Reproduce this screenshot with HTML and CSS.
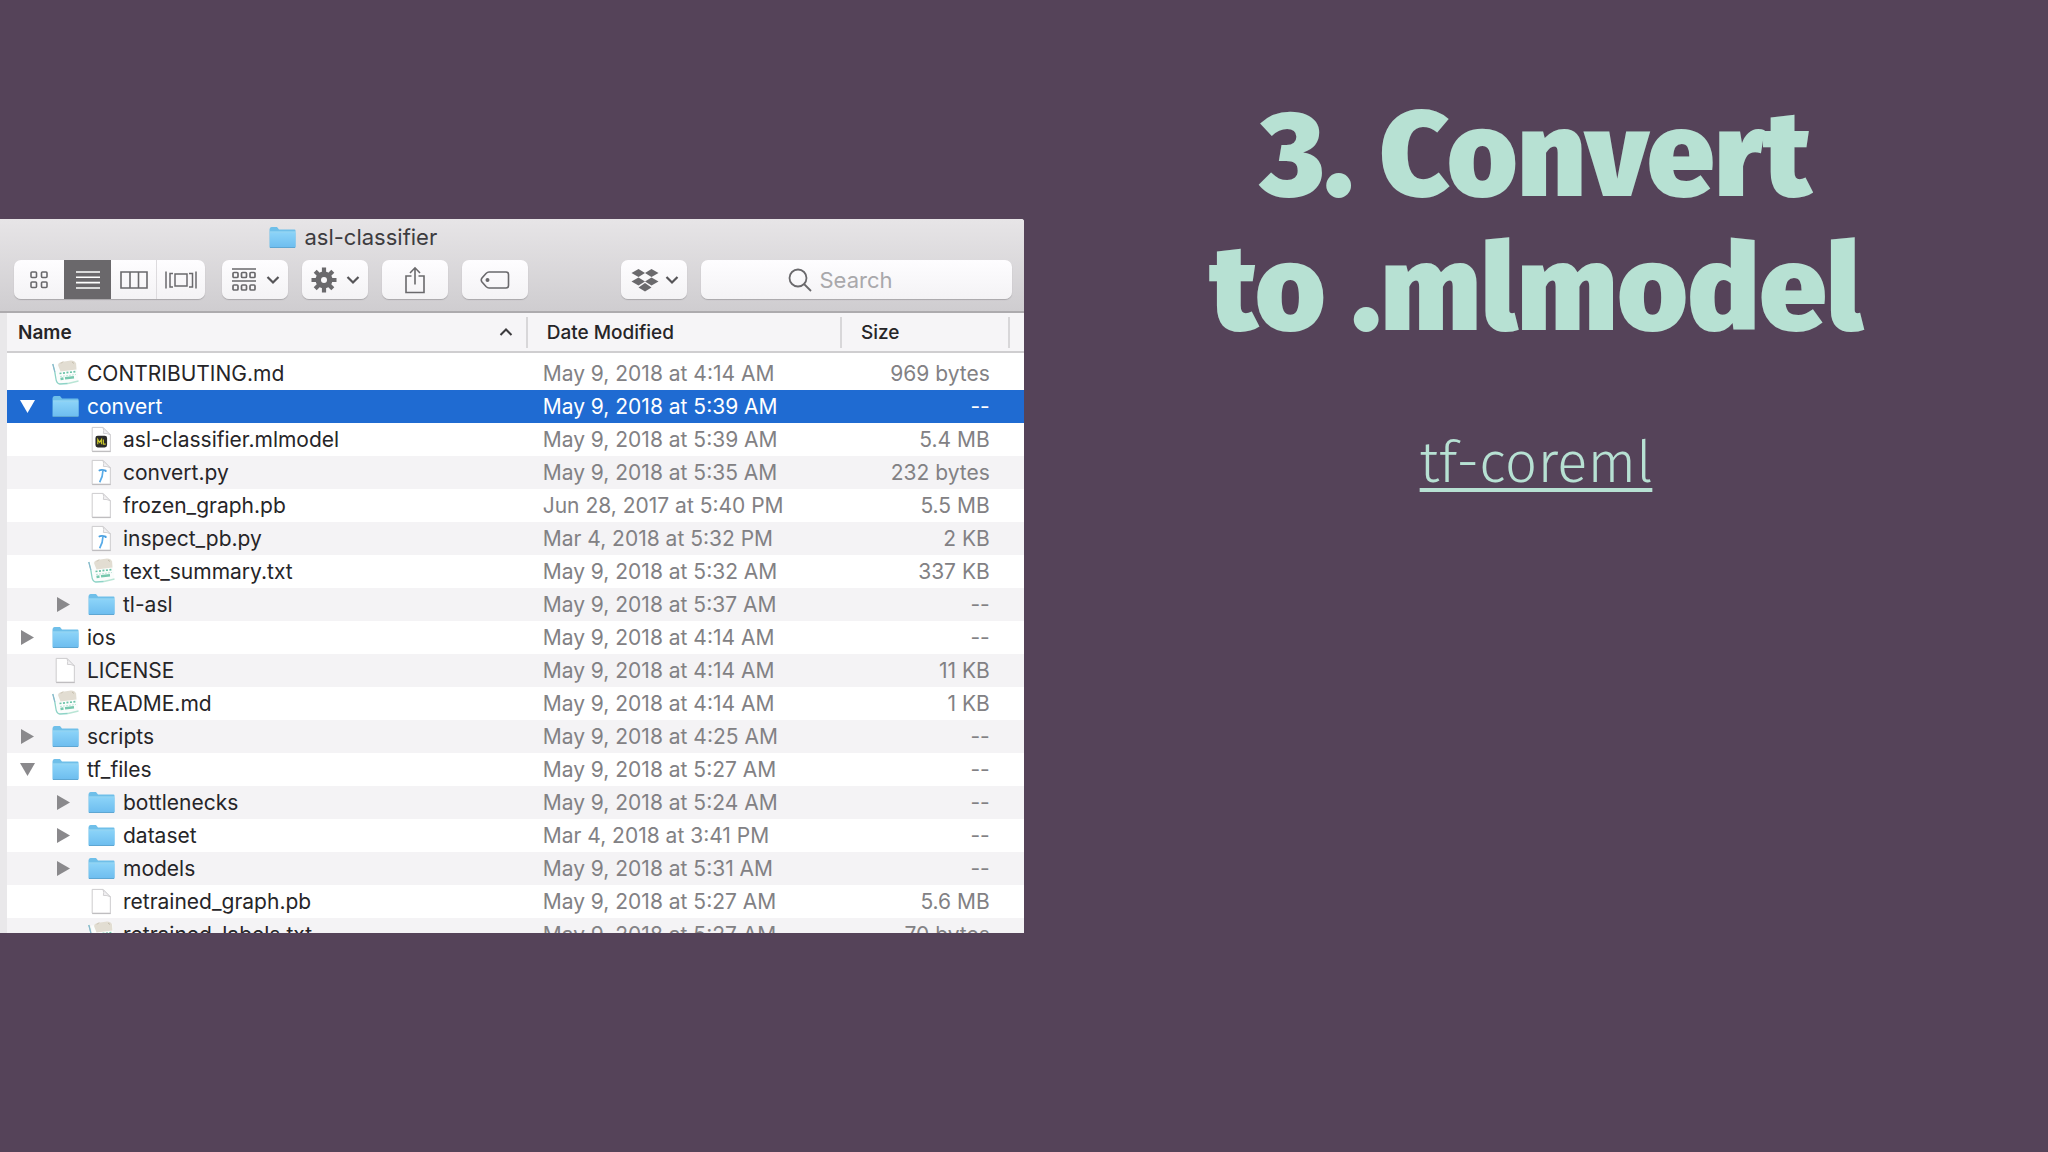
FILE: index.html
```html
<!DOCTYPE html>
<html lang="en">
<head>
<meta charset="utf-8">
<meta name="viewport" content="width=device-width, initial-scale=1">
<title>3. Convert to .mlmodel</title>
<link rel="stylesheet" href="styles.css">
</head>
<body>
<svg class="defs" aria-hidden="true">
  <defs>
    <linearGradient id="folder-fill" x1="0" y1="0" x2="0" y2="1">
      <stop offset="0" stop-color="#8bd3f8"/><stop offset="1" stop-color="#6dbdef"/>
    </linearGradient>
    <symbol id="folder" viewBox="0 0 27 23">
      <path d="M0.5 21V3.5Q0.5 1 2.5 1H8l2 2.5h15.5q1 0 1 1V21q0 1-1 1h-24q-1 0-1-1z" fill="#6fbfe9"/>
      <path d="M1 6.5h25.5V20.5q0 1-1 1h-23.500q-1 0-1-1z" fill="url(#folder-fill)"/>
      <path d="M1 6h25.500" stroke="#a3def8"/>
      <path d="M1 21.500h25" stroke="#5ea6d2"/>
    </symbol>
    <symbol id="page" viewBox="0 0 27 29">
      <path d="M3.500 1.500h11.500l8 8v17.500h-19.500z" fill="#fff" stroke="#c9c8ca"/>
      <path d="M15 1.500q1.500 3 0.500 6.500q4-.5 7.500 1.500z" fill="#f1f0f2" stroke="#cfced0"/>
      <path d="M3.500 27.500h20" stroke="#b9b8ba"/>
    </symbol>
    <symbol id="script" viewBox="0 0 27 29">
      <use href="#page" width="27" height="29"/>
      <path d="M10.500 12.500q3-1.500 7.500 0v1.500" fill="none" stroke="#4aa0e0" stroke-width="1.800"/>
      <path d="M15 13q0 6-3.500 12" fill="none" stroke="#58abe8" stroke-width="1.800"/>
    </symbol>
    <symbol id="model" viewBox="0 0 27 29">
      <use href="#page" width="27" height="29"/>
      <rect x="7" y="10.500" width="12.500" height="12.500" rx="2.500" fill="#2b2b28"/>
      <path d="M9.500 19.500v-5l2 3 2-3v5M15.500 14.500v5h2.500" fill="none" stroke="#c9c72c" stroke-width="1.300"/>
    </symbol>
    <symbol id="note" viewBox="0 0 27 27">
      <path d="M3 4.500l21.500-1.500 2 18-20 4z" fill="#fbfdfc"/>
      <path d="M6 5q0-2 3-3l10-1.500q4 0 5 3l.5 6-16 2z" fill="#e2ddd2"/>
      <path d="M9 3.500l2-2M20 2l2 1.500" stroke="#c6bfae"/>
      <path d="M.8 4q2.200 7 3 14 .5 5.500 4 6l8-.5" fill="none" stroke="#8dd3c6" stroke-width="1.300"/>
      <path d="M.8 4l2 8" stroke="#8bb3cf"/>
      <path d="M16 23.500l10.500-2.500" stroke="#b9e5d5" stroke-width="1.300"/>
      <path d="M7.500 13.500l17-2" stroke="#6cc3a8" stroke-width="1.700" stroke-dasharray="2 1.500"/>
      <path d="M8.500 19l3-.5M13 18.200l9-1" stroke="#76c8ae" stroke-width="2.500"/>
      <path d="M8 16.500l16-2" stroke="#bfe5d8" stroke-dasharray="2 1"/>
    </symbol>
    <symbol id="chevron" viewBox="0 0 14 10"><path d="M1.500 2l5.500 5.500 5.500-5.500" fill="none" stroke="#555457" stroke-width="2.200"/></symbol>
  </defs>
</svg>
<main class="slide">
  <section class="finder" aria-label="asl-classifier">
    <header class="chrome">
      <div class="caption"><svg class="icon"><use href="#folder"/></svg><span>asl-classifier</span></div>
      <div class="toolbar">
        <div class="views">
          <button type="button" aria-label="Icons"><svg width="20" height="20" viewBox="0 0 20 20" fill="none" stroke="#6a696c" stroke-width="1.600"><rect x="2" y="2" width="5.500" height="5.500" rx="1"/><rect x="12.500" y="2" width="5.500" height="5.500" rx="1"/><rect x="2" y="12" width="5.500" height="5.500" rx="1"/><rect x="12.500" y="12" width="5.500" height="5.500" rx="1"/></svg></button>
          <button type="button" class="active" aria-label="List"><svg width="26" height="20" viewBox="0 0 26 20" stroke="#fff" stroke-width="1.600"><path d="M1 2h24M1 7.300h24M1 12.600h24M1 18h24"/></svg></button>
          <button type="button" aria-label="Columns"><svg width="28" height="20" viewBox="0 0 28 20" fill="none" stroke="#6a696c" stroke-width="1.600"><path d="M1 2h26v16H1zM10 2v16M18.500 2v16"/></svg></button>
          <button type="button" aria-label="Gallery"><svg width="32" height="20" viewBox="0 0 32 20" fill="none" stroke="#6a696c" stroke-width="1.500"><path d="M1 1.500v17M8 3.500H5v13.500h3M24 3.500h3.500v13.500H24M31 1.500v17M10 4h12v12H10z"/></svg></button>
        </div>
        <button type="button" class="tool" aria-label="Arrange"><svg width="26" height="24" viewBox="0 0 26 24" fill="none" stroke="#6a696c" stroke-width="1.700"><path d="M1 1h24M1 13h24"/><rect x="2" y="4.500" width="5" height="5" rx="1"/><rect x="10.500" y="4.500" width="5" height="5" rx="1"/><rect x="19" y="4.500" width="5" height="5" rx="1"/><rect x="2" y="17" width="5" height="5" rx="1"/><rect x="10.500" y="17" width="5" height="5" rx="1"/><rect x="19" y="17" width="5" height="5" rx="1"/></svg><svg class="chevron"><use href="#chevron"/></svg></button>
        <button type="button" class="tool" aria-label="Action"><svg width="26" height="26" viewBox="-13 -13 26 26"><g stroke="#6a696c" stroke-width="4.200"><path d="M0-12.500v25M-12.500 0h25M-8.800-8.800l17.600 17.600M8.800-8.800L-8.800 8.800"/></g><circle r="8.500" fill="#6a696c"/><circle r="3" fill="#faf9fb"/></svg><svg class="chevron"><use href="#chevron"/></svg></button>
        <button type="button" class="tool" aria-label="Share"><svg width="22" height="28" viewBox="0 0 22 28" fill="none" stroke="#6a696c" stroke-width="1.600"><path d="M7.500 10H2v16.500h18V10h-5.500M11 18.500V2M6 7l5-5.200L16 7"/></svg></button>
        <button type="button" class="tool" aria-label="Tags"><svg width="30" height="20" viewBox="0 0 30 20" fill="none" stroke="#6a696c" stroke-width="1.600"><path d="M9 2h17q2.500 0 2.500 2.500v11q0 2.500-2.500 2.500H9q-1.500 0-3-1.500L2 12q-1.500-2 0-4l4-4.500Q7.500 2 9 2z"/><circle cx="7.500" cy="10" r="1.200" fill="#6a696c"/></svg></button>
        <button type="button" class="tool dropbox" aria-label="Dropbox"><svg width="28" height="24" viewBox="0 0 28 24" fill="#6a696c"><path d="M7.500 1l6.500 4-6.500 4L.5 5zM20.500 1l7 4-7 4L14 5zM7.500 9.500l6.500 4-6.500 4-7-4zM20.500 9.500l7 4-7 4-6.500-4zM14 15l6.500 4.500L14 23.500 7.500 19.500z"/></svg><svg class="chevron"><use href="#chevron"/></svg></button>
        <label class="search"><svg width="24" height="24" viewBox="0 0 24 24" fill="none" stroke="#6a696c" stroke-width="1.800"><circle cx="10" cy="10" r="8.500"/><path d="M16 16l7 7"/></svg><input type="search" placeholder="Search" aria-label="Search"></label>
      </div>
    </header>
    <div class="listing">
      <table>
        <colgroup><col class="col-name"><col class="col-date"><col class="col-size"><col class="col-rest"></colgroup>
        <thead>
          <tr><th scope="col"><div class="sort">Name<svg width="14" height="10" viewBox="0 0 14 10" fill="none" stroke="#3c3b3e" stroke-width="2"><path d="M1.500 8L7 2.500 12.500 8"/></svg></div></th><th scope="col">Date Modified</th><th scope="col">Size</th><td></td></tr>
        </thead>
        <tbody>
          <tr><td><div class="file"><i class="gap"></i><svg class="icon"><use href="#note"/></svg>CONTRIBUTING.md</div></td><td>May 9, 2018 at 4:14 AM</td><td>969 bytes</td><td></td></tr>
          <tr class="selected"><td><div class="file"><button type="button" class="open" aria-label="Collapse convert"></button><svg class="icon"><use href="#folder"/></svg>convert</div></td><td>May 9, 2018 at 5:39 AM</td><td><span class="none">--</span></td><td></td></tr>
          <tr><td><div class="file nested"><i class="gap"></i><svg class="icon"><use href="#model"/></svg>asl-classifier.mlmodel</div></td><td>May 9, 2018 at 5:39 AM</td><td>5.4 MB</td><td></td></tr>
          <tr><td><div class="file nested"><i class="gap"></i><svg class="icon"><use href="#script"/></svg>convert.py</div></td><td>May 9, 2018 at 5:35 AM</td><td>232 bytes</td><td></td></tr>
          <tr><td><div class="file nested"><i class="gap"></i><svg class="icon"><use href="#page"/></svg>frozen_graph.pb</div></td><td>Jun 28, 2017 at 5:40 PM</td><td>5.5 MB</td><td></td></tr>
          <tr><td><div class="file nested"><i class="gap"></i><svg class="icon"><use href="#script"/></svg>inspect_pb.py</div></td><td>Mar 4, 2018 at 5:32 PM</td><td>2 KB</td><td></td></tr>
          <tr><td><div class="file nested"><i class="gap"></i><svg class="icon"><use href="#note"/></svg>text_summary.txt</div></td><td>May 9, 2018 at 5:32 AM</td><td>337 KB</td><td></td></tr>
          <tr><td><div class="file nested"><button type="button" class="closed" aria-label="Expand tl-asl"></button><svg class="icon"><use href="#folder"/></svg>tl-asl</div></td><td>May 9, 2018 at 5:37 AM</td><td><span class="none">--</span></td><td></td></tr>
          <tr><td><div class="file"><button type="button" class="closed" aria-label="Expand ios"></button><svg class="icon"><use href="#folder"/></svg>ios</div></td><td>May 9, 2018 at 4:14 AM</td><td><span class="none">--</span></td><td></td></tr>
          <tr><td><div class="file"><i class="gap"></i><svg class="icon"><use href="#page"/></svg>LICENSE</div></td><td>May 9, 2018 at 4:14 AM</td><td>11 KB</td><td></td></tr>
          <tr><td><div class="file"><i class="gap"></i><svg class="icon"><use href="#note"/></svg>README.md</div></td><td>May 9, 2018 at 4:14 AM</td><td>1 KB</td><td></td></tr>
          <tr><td><div class="file"><button type="button" class="closed" aria-label="Expand scripts"></button><svg class="icon"><use href="#folder"/></svg>scripts</div></td><td>May 9, 2018 at 4:25 AM</td><td><span class="none">--</span></td><td></td></tr>
          <tr><td><div class="file"><button type="button" class="open" aria-label="Collapse tf_files"></button><svg class="icon"><use href="#folder"/></svg>tf_files</div></td><td>May 9, 2018 at 5:27 AM</td><td><span class="none">--</span></td><td></td></tr>
          <tr><td><div class="file nested"><button type="button" class="closed" aria-label="Expand bottlenecks"></button><svg class="icon"><use href="#folder"/></svg>bottlenecks</div></td><td>May 9, 2018 at 5:24 AM</td><td><span class="none">--</span></td><td></td></tr>
          <tr><td><div class="file nested"><button type="button" class="closed" aria-label="Expand dataset"></button><svg class="icon"><use href="#folder"/></svg>dataset</div></td><td>Mar 4, 2018 at 3:41 PM</td><td><span class="none">--</span></td><td></td></tr>
          <tr><td><div class="file nested"><button type="button" class="closed" aria-label="Expand models"></button><svg class="icon"><use href="#folder"/></svg>models</div></td><td>May 9, 2018 at 5:31 AM</td><td><span class="none">--</span></td><td></td></tr>
          <tr><td><div class="file nested"><i class="gap"></i><svg class="icon"><use href="#page"/></svg>retrained_graph.pb</div></td><td>May 9, 2018 at 5:27 AM</td><td>5.6 MB</td><td></td></tr>
          <tr><td><div class="file nested"><i class="gap"></i><svg class="icon"><use href="#note"/></svg>retrained_labels.txt</div></td><td>May 9, 2018 at 5:27 AM</td><td>70 bytes</td><td></td></tr>
        </tbody>
      </table>
    </div>
  </section>
  <section class="message">
    <h1>3. Convert<br>to .mlmodel</h1>
    <a href="#tf-coreml">tf-coreml</a>
  </section>
</main>
</body>
</html>
```
FILE: styles.css
```css
* { box-sizing: border-box; }

body {
  margin: 0;
  background: #554359;
  color: #b7e1d3;
  font-family: "Inter", "Liberation Sans", sans-serif;
}

.defs { position: absolute; width: 0; height: 0; }

button {
  border: 0;
  padding: 0;
  background: none;
  color: inherit;
  font: inherit;
}

.slide {
  display: grid;
  grid-template-columns: 1fr 1fr;
  min-height: 100vh;
}

/* File browser window, cut off at the slide's left edge */
.finder {
  align-self: center;
  display: flex;
  flex-direction: column;
  aspect-ratio: 1024 / 714;
  min-height: 0;
  overflow: hidden;
  border-top-right-radius: 3px;
  background: #fff;
  color: #262528;
  font-size: 21px;
}

.chrome {
  flex: none;
  height: 94px;
  padding: 0 12px 0 14px;
  border-bottom: 2px solid #adabae;
  background: linear-gradient(#e7e5e7, #cfcdd0);
}

.caption {
  display: flex;
  align-items: center;
  justify-content: center;
  gap: 8px;
  height: 36px;
  margin-bottom: 5px;
  padding-right: 32%;
  color: #3d3c3f;
  font-size: 22px;
}

.icon { flex: none; width: 27px; height: 27px; }

.toolbar { display: flex; gap: 14px; height: 39px; }

.views, .tool, .search {
  border-radius: 7px;
  background: linear-gradient(#fefdff, #f4f3f5);
  box-shadow: 0 1px 1px #a9a7aa;
}

.views {
  display: grid;
  grid-template-columns: 50px 47px 46px 48px;
  margin-right: 3px;
  overflow: hidden;
}

.views button, .tool {
  display: flex;
  align-items: center;
  justify-content: center;
}

.views button + button { border-right: 1px solid #dddbde; }
.views button:last-child, .views button.active { border: 0; }
.views button.active { background: #6a686b; }

.tool { flex: none; gap: 9px; width: 66px; }
.dropbox { gap: 6px; margin-left: auto; padding-left: 2px; }
.chevron { width: 14px; height: 10px; }

.search {
  display: flex;
  align-items: center;
  justify-content: center;
  gap: 8px;
  flex: 0 1 311px;
  font-size: 22px;
}

.search input {
  width: 112px;
  min-width: 0;
  margin-right: -6px;
  border: 0;
  padding: 0;
  outline: 0;
  background: none;
  color: inherit;
  font: inherit;
}

.search input::placeholder { color: #a9a8ab; opacity: 1; }

.listing {
  flex: 1;
  min-height: 0;
  overflow: hidden;
  border-left: 7px solid #e9e8ea;
}

table {
  width: 100%;
  table-layout: fixed;
  border-collapse: separate;
  border-spacing: 0;
}

.col-name { width: 51.200%; }
.col-date { width: 30.900%; }
.col-size { width: 16.500%; }

thead th, thead td {
  height: 40px;
  padding: 0 0 0 19px;
  border-bottom: 2px solid #cfced0;
  background: linear-gradient(#d8d7d9, #d8d7d9) right 4px / 2px 31px no-repeat, #f6f5f7;
  font-size: 19px;
  font-weight: 500;
  text-align: left;
}

thead th:first-child { padding-left: 11px; font-weight: 600; }
thead td { background: #f6f5f7; }

.sort {
  display: flex;
  align-items: center;
  justify-content: space-between;
  padding-right: 15px;
}

tbody td {
  height: 33px;
  padding: 0;
  color: #828184;
  white-space: nowrap;
}

tbody tr:first-child td { height: 37px; padding-top: 4px; }
tbody tr:nth-child(even) { background: #f4f3f5; }
tbody td:first-child { color: #262528; }
tbody td:nth-child(2) { padding-left: 15px; }
tbody td:nth-child(3) { padding-right: 20px; text-align: right; }
tbody tr.selected { background: #1f6bd2; }
tbody tr.selected td { color: #fff; }

.file {
  display: flex;
  align-items: center;
  gap: 8px;
  height: 33px;
  padding-left: 13px;
}

.nested { padding-left: 49px; }

.gap, .file button { width: 16px; margin-right: 8px; }

.open::before, .closed::before {
  content: "";
  display: block;
  width: 15px;
  height: 13px;
  background: #8a898c;
  clip-path: polygon(0 0, 100% 0, 50% 100%);
}

.closed::before {
  width: 13px;
  height: 15px;
  margin-left: 1px;
  clip-path: polygon(0 0, 100% 50%, 0 100%);
}

.selected .open::before { background: #fff; }

.message {
  display: flex;
  flex-direction: column;
  align-items: center;
  padding-top: 89px;
  font-family: "Fira Sans", "Noto Sans CJK SC", "Noto Sans", sans-serif;
}

h1 {
  margin: 0 0 71px;
  font-size: 120px;
  font-weight: 900;
  line-height: 134px;
  text-align: center;
}

.message a {
  color: inherit;
  font-size: 57px;
  font-weight: 300;
  line-height: 70px;
  text-decoration: underline 4px;
  text-underline-offset: 6px;
}
```
